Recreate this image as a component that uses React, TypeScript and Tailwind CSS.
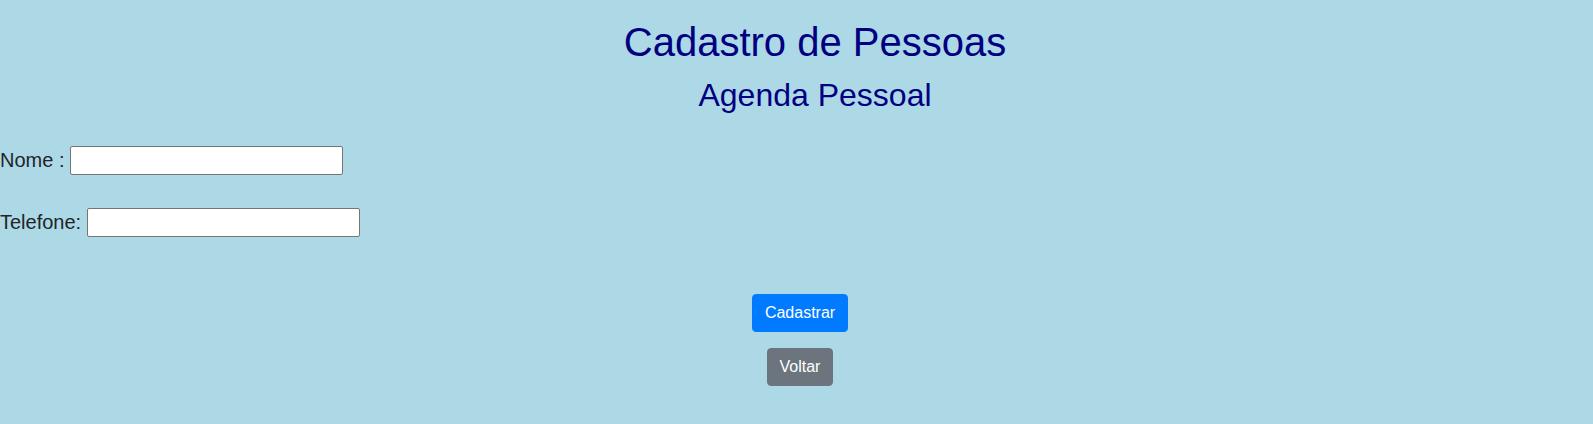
import React from 'react';

const App: React.FC = () => {
  return (
    <div className="h-[424px] w-full bg-[#add8e6] pt-[18px] font-['Liberation_Sans',Arial,sans-serif] text-[#212529]">
      {/* Cabeçalho */}
      <div className="pl-[37px] text-center text-[#000080]">
        <h1 className="mb-[10px] text-[40px] leading-[1.2]">Cadastro de Pessoas</h1>
        <h2 className="text-[32px] leading-[1.2]">Agenda Pessoal</h2>
      </div>

      {/* Formulário */}
      <form className="mt-[31px] flex flex-col gap-[32px] text-[20px]">
        <div className="flex items-center gap-[6px]">
          <label htmlFor="nome">Nome :</label>
          <input
            id="nome"
            type="text"
            className="h-[29px] w-[273px] rounded-[2px] border border-[#767676] bg-white px-[2px]"
          />
        </div>
        <div className="flex items-center gap-[6px]">
          <label htmlFor="telefone">Telefone:</label>
          <input
            id="telefone"
            type="text"
            className="h-[29px] w-[273px] rounded-[2px] border border-[#767676] bg-white px-[2px]"
          />
        </div>
      </form>

      <div className="mt-[57px] flex flex-col items-center gap-4 pl-[7px]">
        <button className="rounded border border-[#007bff] bg-[#007bff] px-3 py-1.5 text-base leading-normal text-white">
          Cadastrar
        </button>
        <button className="rounded border border-[#6c757d] bg-[#6c757d] px-3 py-1.5 text-base leading-normal text-white">
          Voltar
        </button>
      </div>
    </div>
  );
};

export default App;
